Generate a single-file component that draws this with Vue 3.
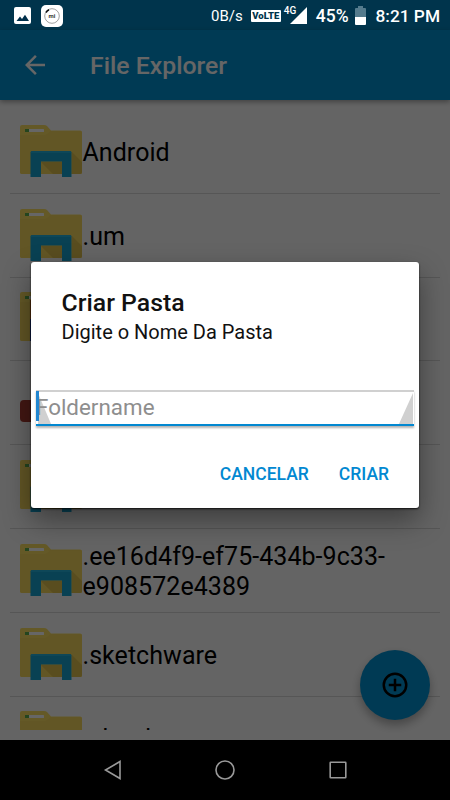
<template>
  <div class="screen">
    <div class="page">
      <div class="status-bg"></div>
      <header class="toolbar">
        <svg class="back" viewBox="0 0 24 24"><path d="M20 11H7.83l5.59-5.59L12 4l-8 8 8 8 1.41-1.41L7.83 13H20z" /></svg>
        <h1>File Explorer</h1>
      </header>
      <ul class="list">
        <li v-for="(item, i) in files" :key="i" class="row">
          <svg class="icon" viewBox="0 0 62 53">
            <template v-if="item.type === 'file'">
              <rect x="0" y="24" width="50" height="22" rx="4" fill="#a83a30" />
            </template>
            <template v-else>
              <path d="M0 2q0-2 2-2h22q2 0 3 1l4 4.500h29q2 0 2 2V47q0 2-2 2H2q-2 0-2-2z" fill="#fbdf63" />
              <path d="M0 10h24q3 0 6-4h30q2 0 2 2v39q0 2-2 2H2q-2 0-2-2z" fill="#f6d65c" />
              <rect x="5" y="4" width="19" height="3" rx=".5" fill="#fff" />
              <rect x="5" y="4" width="4" height="3" fill="#5aad4c" />
              <template v-if="item.type === 'app'">
                <rect x="10" y="8" width="42" height="41" fill="#223a9c" />
                <rect x="10" y="8" width="42" height="19" fill="#c96a1c" />
              </template>
              <template v-else>
                <path d="M52 27l10 10v10q0 2-2 2h-8zM21 37l12 12h9V37z" fill="#dfc04e" />
                <path d="M10.500 28q0-2 2-2h37q2 0 2 2v24H42V36.500H21V52H10.500z" fill="#18a3cf" />
                <path d="M12 26h38q1.500 0 1.500 2h-41q0-2 1.500-2z" fill="#24b1db" />
              </template>
            </template>
          </svg>
          <span class="name">{{ item.name }}</span>
        </li>
      </ul>
      <button class="fab">
        <svg viewBox="0 0 24 24"><path d="M13 7h-2v4H7v2h4v4h2v-4h4v-2h-4zM12 2a10 10 0 100 20 10 10 0 000-20zm0 18a8 8 0 110-16 8 8 0 010 16z" /></svg>
      </button>
    </div>

    <div class="mask">
      <div class="dialog">
        <h2>Criar Pasta</h2>
        <p>Digite o Nome Da Pasta</p>
        <div class="field">
          <svg class="edge" viewBox="0 0 377 34" preserveAspectRatio="none">
            <path d="M2 2l13 32H2zM376 2v32h-14z" fill="#d0d0d0" />
          </svg>
          <input v-model="folderName" placeholder="Foldername" />
          <i class="caret"></i>
        </div>
        <div class="actions">
          <button>CANCELAR</button>
          <button>CRIAR</button>
        </div>
      </div>
    </div>

    <div class="statusbar">
      <svg class="pic" viewBox="0 0 17 17">
        <rect width="17" height="17" rx="2" fill="#fff" />
        <path d="M2.500 14l3.500-4.500 2 2.500 3-4.200 4 6.200z" fill="#00304c" />
      </svg>
      <div class="mi">
        <svg viewBox="0 0 22 22">
          <circle cx="11" cy="11" r="7.300" fill="none" stroke="#888" stroke-width=".8" />
          <path d="M5 7.500A7.300 7.300 0 018 4.800" fill="none" stroke="#111" stroke-width="1.600" />
          <text x="11" y="13" text-anchor="middle">mi</text>
        </svg>
      </div>
      <span class="speed">0B/s</span>
      <span class="volte">VoLTE</span>
      <div class="signal">
        <span>4G</span>
        <svg viewBox="0 0 18 18"><path d="M18 0v18H0z" fill="#fff" /></svg>
      </div>
      <span class="percent">45%</span>
      <svg class="battery" viewBox="0 0 11 19">
        <path d="M3 0h5v2h2q1 0 1 1v8H0V3q0-1 1-1h2z" fill="#547b8d" />
        <path d="M0 11h11v7q0 1-1 1H1q-1 0-1-1z" fill="#fff" />
      </svg>
      <span class="time">8:21 PM</span>
    </div>

    <nav class="navbar">
      <svg viewBox="0 0 20 20"><path d="M17 1.500v17L2.500 10z" /></svg>
      <svg viewBox="0 0 20 20"><circle cx="10" cy="10" r="9" /></svg>
      <svg viewBox="0 0 20 20"><rect x="2.200" y="2.200" width="15.600" height="15.600" rx=".5" /></svg>
    </nav>
  </div>
</template>

<script setup>
import { ref } from 'vue'

const folderName = ref('')

const files = [
  { name: 'Android', type: 'folder' },
  { name: '.um', type: 'folder' },
  { name: '', type: 'app' },
  { name: '', type: 'file' },
  { name: '', type: 'folder' },
  { name: '.ee16d4f9-ef75-434b-9c33-e908572e4389', type: 'folder' },
  { name: '.sketchware', type: 'folder' },
  { name: '.ebook', type: 'folder' }
]
</script>

<style>
body {
  margin: 0;
  background: #000;
}
</style>

<style scoped>
.screen {
  position: relative;
  width: 450px;
  height: 800px;
  overflow: hidden;
  background: #000;
  font-family: Roboto, "Liberation Sans", sans-serif;
}
h1, h2, p, ul {
  margin: 0;
  padding: 0;
}
button {
  border: 0;
  padding: 0;
  font-family: inherit;
}
.page {
  position: relative;
  display: flex;
  flex-direction: column;
  height: 740px;
  background: #fafafa;
}
.status-bg {
  height: 30px;
  background: #0283bd;
}
.toolbar {
  display: flex;
  align-items: center;
  height: 70px;
  box-sizing: border-box;
  padding-left: 20px;
  background: #0291d2;
  box-shadow: 0 2px 5px rgba(0, 0, 0, .35);
}
.back {
  width: 30px;
  height: 30px;
  fill: #fff;
}
.toolbar h1 {
  margin-left: 40px;
  padding-top: 2px;
  font-size: 24.800px;
  font-weight: 500;
  line-height: 30px;
  color: #fff;
}
.list {
  list-style: none;
  height: 620px;
  margin: 10px 10px 0;
  overflow: hidden;
}
.row {
  display: flex;
  align-items: center;
  box-sizing: border-box;
  height: 83.800px;
  padding-left: 10px;
  border-bottom: 1px solid #d6d6d6;
}
.icon {
  flex: none;
  width: 62px;
  height: 53px;
}
.name {
  width: 340px;
  padding-top: 3px;
  font-size: 25px;
  line-height: 30px;
  letter-spacing: .05px;
  color: #000;
  margin-left: .5px;
}
.fab {
  position: absolute;
  right: 20px;
  bottom: 20px;
  width: 70px;
  height: 70px;
  border-radius: 50%;
  background: #0291d2;
  box-shadow: 0 5px 10px rgba(0, 0, 0, .3);
  display: flex;
  align-items: center;
  justify-content: center;
}
.fab svg {
  width: 30px;
  height: 30px;
}
/* 遮罩 + 弹窗 */
.mask {
  position: absolute;
  top: 0;
  left: 0;
  width: 450px;
  height: 740px;
  background: rgba(0, 0, 0, .6);
}
.dialog {
  box-sizing: border-box;
  width: 388px;
  height: 246px;
  margin: 262px 0 0 31px;
  padding-top: 26px;
  background: #fff;
  border-radius: 3px;
  box-shadow: 0 1px 2px rgba(0, 0, 0, .8), 0 12px 28px rgba(0, 0, 0, .4);
}
.dialog h2 {
  padding-left: 30.500px;
  font-size: 24.800px;
  font-weight: 500;
  line-height: 29px;
  color: #111;
}
.dialog p {
  padding-left: 30.500px;
  font-size: 20px;
  line-height: 30px;
  color: #111;
}
.field {
  position: relative;
  box-sizing: border-box;
  width: 378px;
  height: 36px;
  margin: 43px 0 0 5px;
  border-top: 2px solid #d0d0d0;
  border-bottom: 2px solid #0288d1;
  box-shadow: 0 2px 2px rgba(0, 0, 0, .3);
  background: #fff;
}
.edge {
  position: absolute;
  top: -1px;
  left: 0;
  width: 378px;
  height: 33px;
}
.field input {
  position: relative;
  display: block;
  width: 100%;
  height: 29px;
  padding: 0;
  border: 0;
  outline: none;
  background: transparent;
  font-family: inherit;
  font-size: 22.400px;
  color: #111;
}
.field input::placeholder {
  color: #8e8e8e;
  opacity: 1;
}
.caret {
  position: absolute;
  left: 0;
  top: -1px;
  width: 3px;
  height: 30px;
  background: #2186d1;
}
.actions {
  display: flex;
  justify-content: flex-end;
  gap: 30px;
  margin-top: 33px;
  padding-right: 30px;
}
.actions button {
  background: none;
  color: #0288d1;
  font-size: 17.500px;
  font-weight: 500;
  line-height: 30px;
}
/* 状态栏 */
.statusbar {
  position: absolute;
  top: 0;
  left: 0;
  display: flex;
  align-items: center;
  box-sizing: border-box;
  width: 450px;
  height: 31px;
  padding: 0 10px 0 14px;
  color: #fff;
  white-space: nowrap;
}
.pic {
  width: 17px;
  height: 17px;
}
.mi {
  width: 22px;
  height: 22px;
  margin-left: 10px;
  border-radius: 5px;
  background: #fff;
}
.mi svg {
  display: block;
}
.mi text {
  font-size: 6px;
  font-weight: 700;
  fill: #333;
}
.speed {
  margin-left: auto;
  font-size: 15px;
}
.volte {
  box-sizing: border-box;
  width: 30px;
  height: 12px;
  margin-left: 8px;
  border-radius: 1px;
  background: #fff;
  color: #00344b;
  font-size: 9.500px;
  font-weight: 900;
  line-height: 12px;
  text-align: center;
}
.signal {
  position: relative;
  width: 23px;
  height: 19px;
  margin-left: 3px;
}
.signal span {
  position: absolute;
  left: 0;
  top: 0;
  font-size: 10px;
  font-weight: 500;
  line-height: 9px;
}
.signal svg {
  display: block;
  width: 17px;
  height: 17px;
  margin: 1px 0 0 6px;
}
.percent {
  margin-left: 9px;
  font-size: 17.500px;
  font-weight: 500;
}
.battery {
  width: 11px;
  height: 19px;
  margin-left: 6px;
}
.time {
  margin-left: 10px;
  font-size: 17.300px;
  font-weight: 500;
}
.navbar {
  display: flex;
  align-items: center;
  justify-content: center;
  gap: 92.500px;
  height: 60px;
}
.navbar svg {
  width: 20px;
  height: 20px;
  fill: none;
  stroke: #999;
  stroke-width: 1.600;
}
</style>
